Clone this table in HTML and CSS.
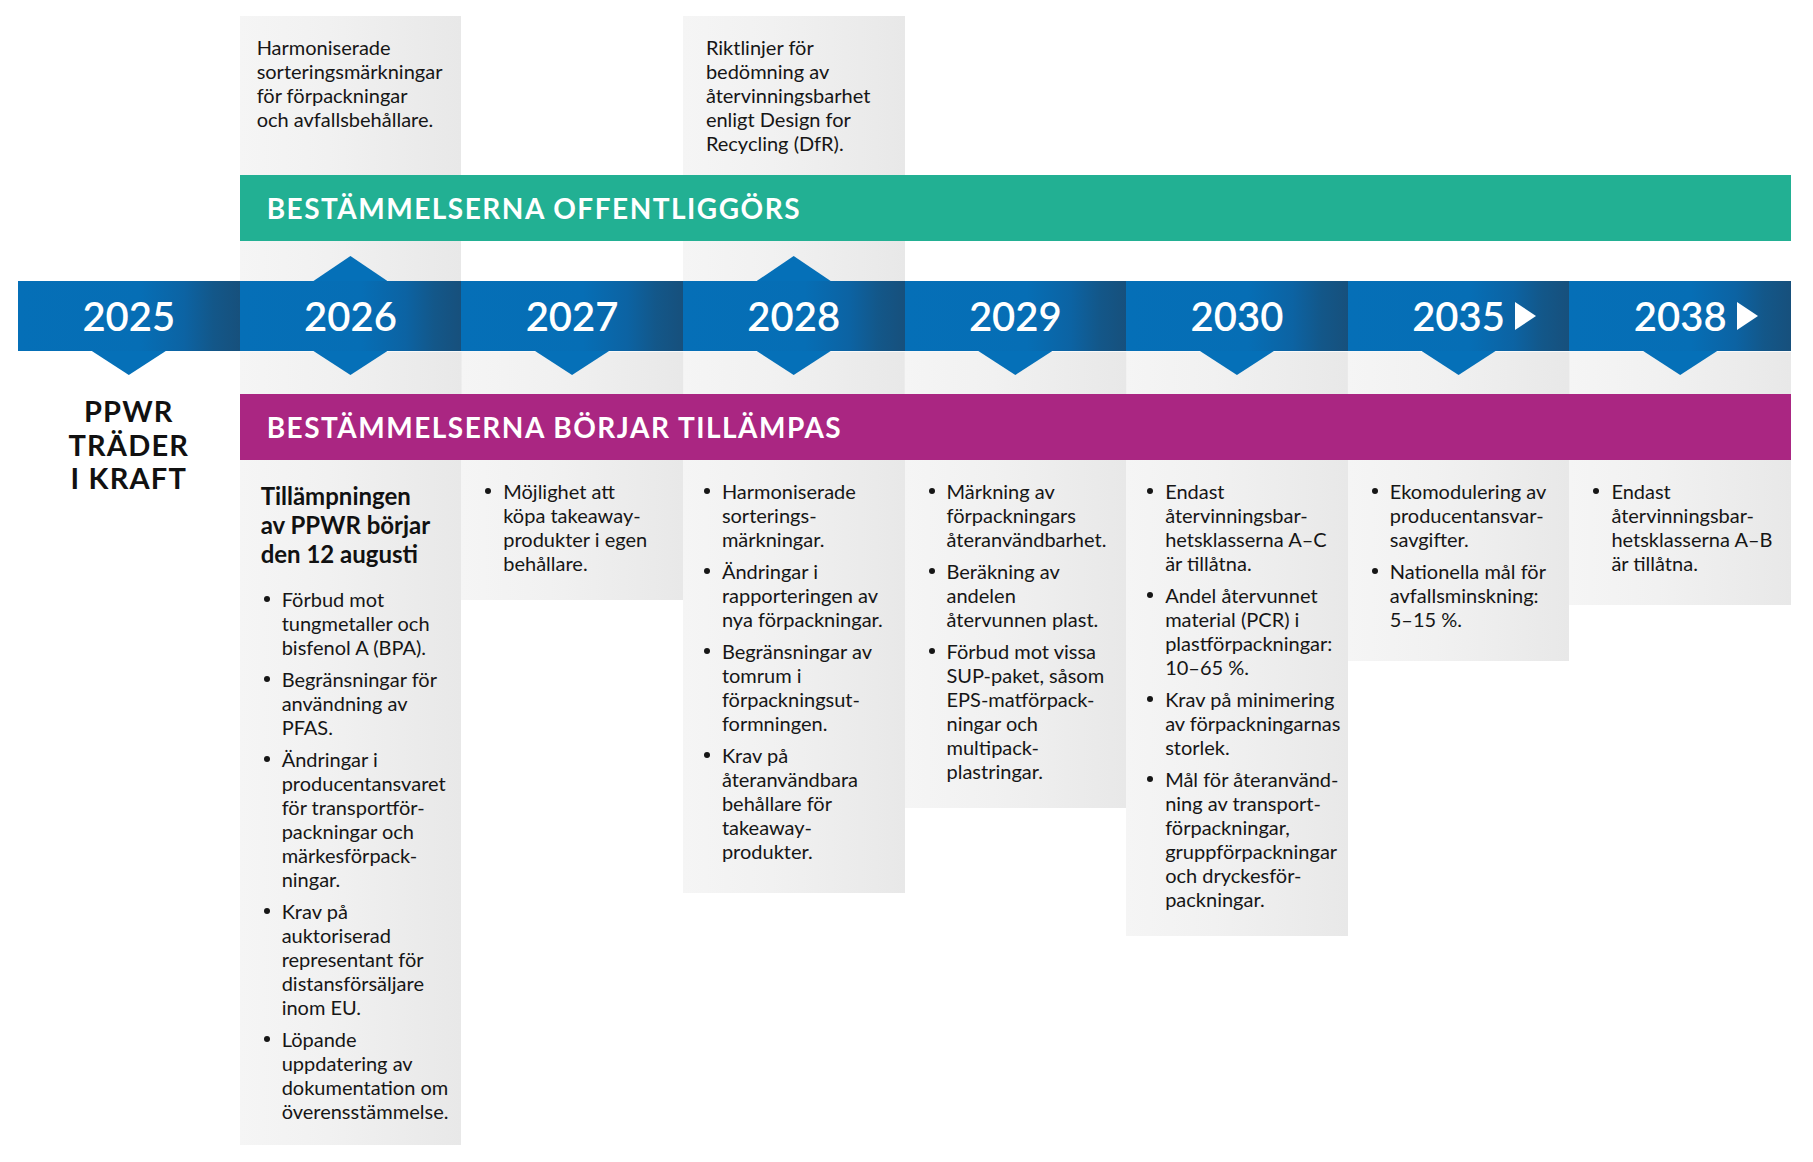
FILE: index.html
```html
<!DOCTYPE html>
<html lang="sv">
<head>
<meta charset="utf-8">
<title>PPWR tidslinje</title>
<link rel="stylesheet" href="styles.css">
</head>
<body>
<div class="timeline">
  <div class="note gray c2">Harmoniserade<br>sorteringsmärkningar<br>för förpackningar<br>och avfallsbehållare.</div>
  <div class="note note-wide gray c4">Riktlinjer för<br>bedömning av<br>återvinningsbarhet<br>enligt Design for<br>Recycling (DfR).</div>

  <div class="bar bar-green">BESTÄMMELSERNA OFFENTLIGGÖRS</div>

  <div class="gap-up gray c2"></div>
  <div class="gap-up gray c4"></div>

  <div class="year c1"><span class="num">2025</span></div>
  <div class="year up c2"><span class="num">2026</span></div>
  <div class="year c3"><span class="num">2027</span></div>
  <div class="year up c4"><span class="num">2028</span></div>
  <div class="year c5"><span class="num">2029</span></div>
  <div class="year c6"><span class="num">2030</span></div>
  <div class="year c7"><span class="num more">2035</span></div>
  <div class="year c8"><span class="num more">2038</span></div>

  <div class="gap-down gray"></div>

  <div class="bar bar-purple">BESTÄMMELSERNA BÖRJAR TILLÄMPAS</div>

  <div class="ppwr c1">PPWR<br>TRÄDER<br>I KRAFT</div>

  <div class="content content-lead gray c2">
    <h2 class="lead">Tillämpningen<br>av PPWR börjar<br>den 12 augusti</h2>
    <ul>
      <li>Förbud mot<br>tungmetaller och<br>bisfenol A (BPA).</li>
      <li>Begränsningar för<br>användning av<br>PFAS.</li>
      <li>Ändringar i<br>producentansvaret<br>för transportför-<br>packningar och<br>märkesförpack-<br>ningar.</li>
      <li>Krav på<br>auktoriserad<br>representant för<br>distansförsäljare<br>inom EU.</li>
      <li>Löpande<br>uppdatering av<br>dokumentation om<br>överensstämmelse.</li>
    </ul>
  </div>

  <div class="content gray c3">
    <ul>
      <li>Möjlighet att<br>köpa takeaway-<br>produkter i egen<br>behållare.</li>
    </ul>
  </div>

  <div class="content gray c4 pad-l narrow">
    <ul>
      <li>Harmoniserade<br>sorterings-<br>märkningar.</li>
      <li>Ändringar i<br>rapporteringen av<br>nya förpackningar.</li>
      <li>Begränsningar av<br>tomrum i<br>förpackningsut-<br>formningen.</li>
      <li>Krav på<br>återanvändbara<br>behållare för<br>takeaway-<br>produkter.</li>
    </ul>
  </div>

  <div class="content gray c5">
    <ul>
      <li>Märkning av<br>förpackningars<br>återanvändbarhet.</li>
      <li>Beräkning av<br>andelen<br>återvunnen plast.</li>
      <li>Förbud mot vissa<br>SUP-paket, såsom<br>EPS-matförpack-<br>ningar och<br>multipack-<br>plastringar.</li>
    </ul>
  </div>

  <div class="content gray c6 narrow">
    <ul>
      <li>Endast<br>återvinningsbar-<br>hetsklasserna A–C<br>är tillåtna.</li>
      <li>Andel återvunnet<br>material (PCR) i<br>plastförpackningar:<br>10–65 %.</li>
      <li>Krav på minimering<br>av förpackningarnas<br>storlek.</li>
      <li>Mål för återanvänd-<br>ning av transport-<br>förpackningar,<br>gruppförpackningar<br>och dryckesför-<br>packningar.</li>
    </ul>
  </div>

  <div class="content gray c7 pad-l">
    <ul>
      <li>Ekomodulering av<br>producentansvar-<br>savgifter.</li>
      <li>Nationella mål för<br>avfallsminskning:<br>5–15 %.</li>
    </ul>
  </div>

  <div class="content gray c8 pad-l">
    <ul>
      <li>Endast<br>återvinningsbar-<br>hetsklasserna A–B<br>är tillåtna.</li>
    </ul>
  </div>
</div>
</body>
</html>
```

FILE: styles.css
```css
* {
  box-sizing: border-box;
  margin: 0;
  padding: 0;
}

html, body {
  background: #ffffff;
}

body {
  font-family: Lato, "Liberation Sans", sans-serif;
  color: #161616;
}

.timeline {
  display: grid;
  grid-template-columns: repeat(8, 221.625px);
  grid-template-rows: 159px 66px 40px 70px 43px 66px auto;
  margin: 16px 0 0 18px;
}

.c1 { grid-column: 1; }
.c2 { grid-column: 2; }
.c3 { grid-column: 3; }
.c4 { grid-column: 4; }
.c5 { grid-column: 5; }
.c6 { grid-column: 6; }
.c7 { grid-column: 7; }
.c8 { grid-column: 8; }

.gray {
  background: linear-gradient(to right, #f5f5f5 0%, #f1f1f1 40%, #e8e8e8 100%);
}

.note {
  grid-row: 1;
  padding: 19px 0 0 17px;
  font-size: 20px;
  line-height: 24px;
  white-space: nowrap;
}

.note-wide {
  padding-left: 23px;
}

.bar {
  grid-column: 2 / 9;
  display: flex;
  align-items: center;
  padding-left: 27px;
  color: #ffffff;
  font-weight: 700;
  font-size: 28px;
  letter-spacing: 1.5px;
  white-space: nowrap;
}

.bar-green {
  grid-row: 2;
  background: #22b093;
}

.bar-purple {
  grid-row: 6;
  background: #aa2682;
}

.gap-up {
  grid-row: 3;
}

.gap-down {
  grid-row: 5;
  grid-column: 2 / 9;
  background-size: calc(100% / 7) 100%;
  border-top: 1px solid #f8f8f8;
}

.year {
  grid-row: 4;
  position: relative;
  z-index: 1;
  display: flex;
  align-items: center;
  justify-content: center;
  background: linear-gradient(to right, #056fb7 0%, #066eb5 55%, #0c63a3 75%, #135789 88%, #17507c 100%);
  color: #ffffff;
  font-size: 40px;
  font-weight: 600;
}

.year::after {
  content: "";
  position: absolute;
  left: 50%;
  bottom: -24px;
  width: 74px;
  height: 24px;
  margin-left: -37px;
  background: #0570b8;
  clip-path: polygon(0 0, 100% 0, 50% 100%);
}

.year.up::before {
  content: "";
  position: absolute;
  left: 50%;
  top: -25px;
  width: 74px;
  height: 25px;
  margin-left: -37px;
  background: #0570b8;
  clip-path: polygon(50% 0, 100% 100%, 0 100%);
}

.num {
  position: relative;
  line-height: 1;
}

.num.more::after {
  content: "";
  position: absolute;
  left: calc(100% + 10px);
  top: 50%;
  margin-top: -14px;
  width: 0;
  height: 0;
  border-left: 21px solid #ffffff;
  border-top: 14px solid transparent;
  border-bottom: 14px solid transparent;
}

.ppwr {
  grid-row: 6 / 8;
  align-self: start;
  text-align: center;
  font-size: 29px;
  line-height: 33.5px;
  font-weight: 700;
  letter-spacing: 1.2px;
  color: #111111;
}

.content {
  grid-row: 7;
  align-self: start;
  padding: 19px 0 25px 22px;
  font-size: 20px;
  line-height: 24px;
  white-space: nowrap;
}

.content.content-lead {
  padding: 21px 0 22px 21px;
}

.content.pad-l {
  padding-bottom: 30px;
}

.content.narrow {
  padding-left: 19px;
}

.lead {
  font-size: 24px;
  line-height: 29px;
  font-weight: 700;
  margin-bottom: 19px;
  color: #111111;
}

.content-lead ul {
  margin-left: 1px;
}

.content ul {
  list-style: none;
}

.content li {
  position: relative;
  padding-left: 20px;
}

.content li + li {
  margin-top: 8px;
}

.content li::before {
  content: "";
  position: absolute;
  left: 2px;
  top: 9px;
  width: 6px;
  height: 6px;
  border-radius: 50%;
  background: #161616;
}
```
